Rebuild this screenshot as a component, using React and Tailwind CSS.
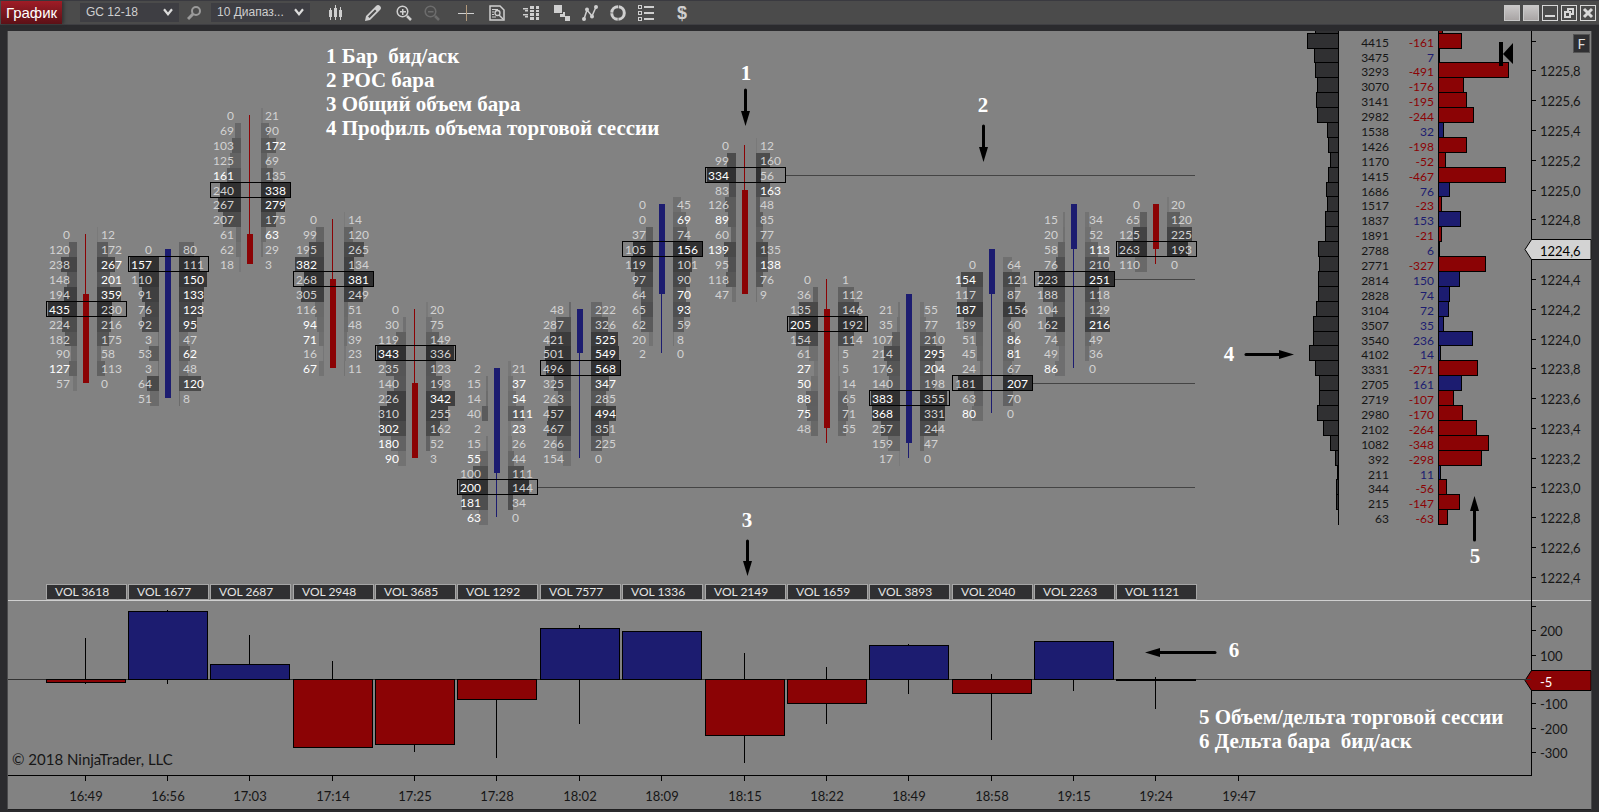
import React from 'react';

const ROW = 14.89;
const RED = '#8b0305';
const BLUE = '#1c1c70';

// one entry per bar: first price row, bid/ask rows ("!" = highlighted), POC row,
// candle body and wick in price rows, delta body and wick in pane pixels
const BARS = [
  { time: '16:49', vol: 3618, first: 13, poc: 5, up: false, body: [17, 23], wick: [13, 23], delta: [78, 81], dWick: [37, 83],
    rows: '0 12|120 172|238 267!|148 201!|194 359!|435! 230|224 216|182 175|90 58|127! 113|57 0' },
  { time: '16:56', vol: 1677, first: 14, poc: 1, up: true, body: [14, 24], wick: [14, 24], delta: [10, 78], dWick: [9, 83],
    rows: '0 80|157! 111|110 150!|91 133!|76 123!|92 95!|3 47|53 62!|3 48|64 120!|51 8' },
  { time: '17:03', vol: 2687, first: 5, poc: 5, up: false, body: [13, 15], wick: [5, 15], delta: [63, 78], dWick: [34, 78],
    rows: '0 21|69 90|103 172!|125 69|161! 135|240 338!|267 279!|207 175|61 63!|62 29|18 3' },
  { time: '17:14', vol: 2948, first: 12, poc: 4, up: false, body: [16, 22], wick: [12, 22], delta: [78, 146], dWick: [60, 146],
    rows: '0 14|99 120|195 265|382! 134|268 381!|305 249|116 51|94! 48|71! 39|16 23|67! 11' },
  { time: '17:25', vol: 3685, first: 18, poc: 3, up: false, body: [23, 28], wick: [18, 28], delta: [78, 143], dWick: [78, 151],
    rows: '0 20|30 75|119 149|343! 336|235 123|140 193|226 342!|310 255|302! 162|180! 52|90! 3' },
  { time: '17:28', vol: 1292, first: 22, poc: 8, up: true, body: [22, 29], wick: [22, 32], line: true, delta: [78, 98], dWick: [78, 157],
    rows: '2 21|15 37!|14 54!|40 111!|2 23!|15 26|55! 44|100 111|200! 144|181! 34|63! 0' },
  { time: '18:02', vol: 7577, first: 18, poc: 4, up: true, body: [18, 21], wick: [18, 28], delta: [27, 78], dWick: [24, 123],
    rows: '48 222|287 326|421 525!|501 549!|496 568!|325 347!|263 285|457 494!|467 351|266 225|154 0' },
  { time: '18:09', vol: 1336, first: 11, poc: 3, up: true, body: [11, 17], wick: [11, 21], delta: [30, 78], dWick: [30, 78],
    rows: '0 45|0 69!|37 74|105 156!|119 101|97 90|64 70!|65 93!|62 59|20 8|2 0' },
  { time: '18:15', vol: 2149, first: 7, poc: 2, up: false, body: [10, 17], wick: [7, 17], line: true, delta: [78, 134], dWick: [52, 162],
    rows: '0 12|99 160|334! 56|83 163!|126 48|89! 85|60 77|139! 135|95 138!|118 76|47 9' },
  { time: '18:22', vol: 1659, first: 16, poc: 3, up: false, body: [18, 26], wick: [16, 27], delta: [78, 102], dWick: [66, 123],
    rows: '0 1|36 112|135 146|205! 192|154 114|61 5|27! 5|50! 14|88! 65|75! 71|48 55' },
  { time: '18:49', vol: 3893, first: 18, poc: 6, up: true, body: [17, 27], wick: [17, 28], delta: [44, 78], dWick: [43, 93],
    rows: '21 55|35 77|107 210|214 295!|176 204!|140 198|383! 355|368! 331|257 244|159 47|17 0' },
  { time: '18:58', vol: 2040, first: 15, poc: 8, up: true, body: [14, 17], wick: [14, 25], line: true, delta: [78, 92], dWick: [73, 139],
    rows: '0 64|154! 121|117 87|187! 156|139 60|51 86!|45 81!|24 67|181 207!|63 70|80! 0' },
  { time: '19:15', vol: 2263, first: 12, poc: 4, up: true, body: [11, 14], wick: [11, 22], line: true, delta: [40, 78], dWick: [40, 90],
    rows: '15 34|20 52|58 113!|76 210|223 251!|188 118|104 129|162 216!|74 49|49 36|86! 0' },
  { time: '19:24', vol: 1121, first: 11, poc: 3, up: false, body: [11, 14], wick: [11, 15], delta: [78, 79], dWick: [76, 108],
    rows: '0 20|65 120|125 225|263 193|110 0' },
];

const TIMES = [...BARS.map((b) => b.time), '19:47'];

// volume and delta per price row of the session; the first row is cut by the top edge
const SESSION = [
  [3230, -28], [4415, -161], [3475, 7], [3293, -491], [3070, -176], [3141, -195], [2982, -244],
  [1538, 32], [1426, -198], [1170, -52], [1415, -467], [1686, 76], [1517, -23], [1837, 153],
  [1891, -21], [2788, 6], [2771, -327], [2814, 150], [2828, 74], [3104, 72], [3507, 35],
  [3540, 236], [4102, 14], [3331, -271], [2705, 161], [2719, -107], [2980, -170], [2102, -264],
  [1082, -348], [392, -298], [211, 11], [344, -56], [215, -147], [63, -63],
];

const barX = (i) => Math.floor(77.2 + 82.35 * i);
const rowY = (k) => Math.round(9.7 + ROW * k);

const parseCell = (s) => ({ value: parseInt(s, 10), hot: s.endsWith('!') });

const FootprintBar = ({ bar, x }) => {
  const rows = bar.rows.split('|').map((r) => r.split(' ').map(parseCell));
  const maxSide = Math.max(...rows.flat().map((c) => c.value));
  const maxTotal = Math.max(...rows.map(([b, a]) => b.value + a.value));
  const color = bar.up ? BLUE : RED;
  const pocY = rowY(bar.first + bar.poc);

  return (
    <g>
      {rows.map(([bid, ask], r) => {
        const k = bar.first + r;
        const top = rowY(k) - 7;
        const h = rowY(k + 1) - rowY(k);
        const shade = r === bar.poc ? 1 : Math.min(0.95, 0.08 + (0.88 * (bid.value + ask.value)) / maxTotal);
        const bw = Math.round((29 * bid.value) / maxSide);
        const aw = Math.round((29 * ask.value) / maxSide);
        return (
          <g key={r} fill="#303031">
            <rect x={x - 8 - bw} y={top} width={bw} height={h} fillOpacity={shade} />
            <rect x={x + 12} y={top} width={aw} height={h} fillOpacity={shade} />
            <text x={x - 15} y={rowY(k) + 5} textAnchor="end" fill={bid.hot ? '#ffffff' : '#d2d2d2'}>{bid.value}</text>
            <text x={x + 16} y={rowY(k) + 5} fill={ask.hot ? '#ffffff' : '#d2d2d2'}>{ask.value}</text>
          </g>
        );
      })}
      <rect x={x} y={rowY(bar.wick[0])} width="1" height={rowY(bar.wick[1]) - rowY(bar.wick[0])} fill={color} />
      <rect x={x - 2} y={rowY(bar.body[0])} width="6" height={rowY(bar.body[1]) - rowY(bar.body[0])} fill={color} />
      {bar.line && <rect x={x + 41} y={pocY} width={1187 - x - 41} height="1" fill="#444444" />}
      <rect x={x - 38.5} y={pocY - 7.5} width="80" height="15" fill="none" stroke="#000000" />
    </g>
  );
};

const PricePane = () => (
  <svg className="block h-[569px] min-w-0 flex-1 overflow-hidden font-[Lato,sans-serif] text-[12px]" shapeRendering="crispEdges">
    {BARS.map((bar, i) => <FootprintBar key={bar.time} bar={bar} x={barX(i)} />)}
    {BARS.map((bar, i) => (
      <g key={bar.time}>
        <rect x={barX(i) - 38.5} y="553.5" width="80" height="15" fill="#303032" stroke="#a6a6a6" />
        <text x={barX(i) - 30} y="565" fill="#e4e4e4">VOL {bar.vol}</text>
      </g>
    ))}
  </svg>
);

const SessionProfile = () => (
  <svg className="block h-[569px] w-[231px] shrink-0 overflow-hidden font-[Lato,sans-serif] text-[12px]" shapeRendering="crispEdges">
    {SESSION.map(([vol, delta], i) => {
      const k = i - 1;
      const y = rowY(k) - 7.5;
      const h = rowY(k + 1) - rowY(k);
      const vw = Math.round(vol * 0.007);
      const dw = Math.max(1, Math.round(Math.abs(delta) * 0.143));
      const color = delta < 0 ? RED : BLUE;
      return (
        <g key={i}>
          <rect x={38.5 - vw} y={y} width={vw} height={h} fill="#303032" stroke="#000000" />
          <rect x="138.5" y={y} width={dw} height={h} fill={color} stroke="#000000" />
          {k >= 0 && <text x="89" y={rowY(k) + 6} textAnchor="end" fill="#161616">{vol}</text>}
          {k >= 0 && <text x="134" y={rowY(k) + 6} textAnchor="end" fill={color}>{delta}</text>}
        </g>
      );
    })}
    <rect x="38" y="0" width="1" height={rowY(33) - 7} fill="#000000" />
    <path d="M199 11h4v24h-4zM203 23l10-11v21z" fill="#000000" shapeRendering="auto" />
  </svg>
);

const PriceAxis = () => {
  const ticks = Array.from({ length: 19 }, (_, i) => i);
  return (
    <svg className="block h-[569px] w-full overflow-visible font-[Lato,sans-serif] text-[13px]" shapeRendering="crispEdges">
      <rect x="0" y="0" width="1" height="570" fill="#000000" />
      {ticks.map((i) => {
        const y = rowY(i * 2);
        return (
          <g key={i}>
            <rect x="0" y={y} width="5" height="1" fill="#000000" />
            {i > 0 && <text x="9" y={y + 6} fill="#161616">{(1226 - i * 0.2).toFixed(1).replace('.', ',')}</text>}
          </g>
        );
      })}
      <path d="M-6 218.5L0.5 208.5H60V228.5H0.5Z" fill="#d3d3d3" stroke="#000000" shapeRendering="auto" />
      <text x="9" y="225" fill="#000000">1224,6</text>
    </svg>
  );
};

const DeltaPane = () => (
  <svg className="block h-[175px] w-full overflow-hidden" shapeRendering="crispEdges">
    <rect x="0" y="78" width="100%" height="1" fill="#333333" />
    {BARS.map((bar, i) => {
      const x = barX(i);
      const [top, bottom] = bar.delta;
      return (
        <g key={bar.time}>
          <rect x={x} y={bar.dWick[0]} width="1" height={bar.dWick[1] - bar.dWick[0]} fill="#000000" />
          <rect x={x - 38.5} y={top + 0.5} width="79" height={bottom - top} fill={top < 78 ? BLUE : RED} stroke="#000000" />
        </g>
      );
    })}
    <rect x="0" y="174" width="100%" height="1" fill="#000000" />
  </svg>
);

const DeltaAxis = () => (
  <svg className="block h-[175px] w-full overflow-visible font-[Lato,sans-serif] text-[13px]" shapeRendering="crispEdges">
    <rect x="0" y="0" width="1" height="175" fill="#000000" />
    {[300, 200, 100, -100, -200, -300].map((v) => {
      const y = Math.round(78 - v * 0.244);
      return (
        <g key={v}>
          <rect x="0" y={y} width="5" height="1" fill="#000000" />
          {v < 300 && <text x="9" y={y + 6} fill="#161616">{v}</text>}
        </g>
      );
    })}
    <path d="M-6 79.5L0.5 69.5H60V89.5H0.5Z" fill={RED} stroke="#000000" shapeRendering="auto" />
    <text x="9" y="86" fill="#ffffff">-5</text>
  </svg>
);

const TimeAxis = () => (
  <svg className="block h-[33px] w-full font-[Lato,sans-serif] text-[13px]" shapeRendering="crispEdges">
    {TIMES.map((t, i) => (
      <g key={t}>
        <rect x={barX(i)} y="0" width="1" height="5" fill="#000000" />
        <text x={barX(i) + 1} y="25" textAnchor="middle" fill="#161616">{t}</text>
      </g>
    ))}
  </svg>
);

// length runs from the tail to the tip, angle 0 points down
const Arrow = ({ x, y, length, angle = 0 }) => (
  <g transform={`translate(${x} ${y}) rotate(${angle})`}>
    <path d={`M0 1V${length - 12}`} stroke="#000000" strokeWidth="3" strokeLinecap="round" />
    <path d={`M-4.500 ${length - 15}H4.500L0 ${length}Z`} fill="#000000" />
  </g>
);

const MARKS = [
  { n: 1, tx: 738, ty: 49, x: 737.5, y: 58, length: 37 },
  { n: 2, tx: 975, ty: 81, x: 975.5, y: 94, length: 37 },
  { n: 3, tx: 739, ty: 496, x: 739.5, y: 509, length: 36 },
  { n: 4, tx: 1221, ty: 330, x: 1237, y: 323.5, length: 49, angle: -90 },
  { n: 5, tx: 1467, ty: 532, x: 1466.5, y: 510, length: 45, angle: 180 },
  { n: 6, tx: 1226, ty: 626, x: 1208, y: 621.5, length: 71, angle: 90 },
];

const Annotations = () => (
  <div className="pointer-events-none absolute inset-0 font-['Liberation_Serif',serif] text-[21px] leading-6 font-bold text-white">
    <svg className="absolute inset-0 h-full w-full">
      {MARKS.map((m) => (
        <g key={m.n}>
          <text x={m.tx} y={m.ty} textAnchor="middle" fill="#ffffff">{m.n}</text>
          <Arrow {...m} />
        </g>
      ))}
    </svg>
    <div className="absolute top-[13px] left-[318px] whitespace-pre">
      <p>1 Бар  бид/аск</p>
      <p>2 POC бара</p>
      <p>3 Общий объем бара</p>
      <p>4 Профиль объема торговой сессии</p>
    </div>
    <div className="absolute top-[674px] left-[1191px] whitespace-pre">
      <p>5 Объем/дельта торговой сессии</p>
      <p>6 Дельта бара  бид/аск</p>
    </div>
  </div>
);

const ToolIcon = ({ label, className = '', children }) => (
  <button type="button" aria-label={label} className={`h-4 w-4 shrink-0 text-[#cfcfcf] ${className}`}>
    <svg viewBox="0 0 16 16" className="block h-4 w-4" fill="currentColor">{children}</svg>
  </button>
);

const ToolSelect = ({ label, value }) => (
  <label className="relative block h-[19px] w-[99px] shrink-0 bg-[#3e3e43]">
    <select aria-label={label} className="block h-full w-full appearance-none pl-1.5 text-[12px] leading-[19px] text-[#cfcfcf] outline-none">
      <option>{value}</option>
    </select>
    <svg viewBox="0 0 10 8" className="pointer-events-none absolute top-[5px] right-[6px] h-2 w-[10px]" fill="none" stroke="#dcdcdc" strokeWidth="2.200">
      <path d="M1 1.200l4 5 4-5" />
    </svg>
  </label>
);

const WindowButton = ({ label, children }) => (
  <button type="button" aria-label={label} className="h-4 w-4 border border-[#d8d8d8]">
    <svg viewBox="0 0 14 14" className="block h-[14px] w-[14px]" fill="none" stroke="#d8d8d8" strokeWidth="2">{children}</svg>
  </button>
);

const Toolbar = () => (
  <header className="flex h-[25px] items-center border-t border-b border-t-[#3a3a40] border-b-[#3f3f43] bg-[#4b4b4b] pl-px pr-[3px] font-['Liberation_Sans',sans-serif]">
    <h1 className="h-[23px] w-[61px] shrink-0 bg-linear-to-b from-[#a01c26] to-[#5c1117] text-center text-[15px] leading-[23px] text-white shadow-[2px_0_3px_#333333]">График</h1>
    <div className="ml-[18px] flex items-center">
      <ToolSelect label="Инструмент" value="GC 12-18" />
      <button type="button" aria-label="Поиск" className="mx-2 h-4 w-4 text-[#9a9a9a]">
        <svg viewBox="0 0 16 16" className="block h-4 w-4" fill="none" stroke="currentColor" strokeWidth="2">
          <circle cx="9" cy="6" r="4" />
          <path d="M6 9l-5 5" strokeWidth="3" />
        </svg>
      </button>
      <ToolSelect label="Интервал" value="10 Диапаз..." />
    </div>
    <nav className="ml-[18px] flex items-center gap-3">
      <ToolIcon label="Стиль бара">
        <path d="M1 5h3v7H1zM6 3h3v9H6zM11 5h3v7h-3zM2 3h1v12H2zM7 0h1v15H7zM12 2h1v13h-1z" />
      </ToolIcon>
      <ToolIcon label="Рисование" className="ml-[9px]">
        <path d="M0 16l1-5L11 1q2-2 4 0t0 4L5 15zM3 11.500L4.500 13 11.500 6 10 4.500z" fillRule="evenodd" />
      </ToolIcon>
      <ToolIcon label="Увеличить" className="ml-[3px]">
        <circle cx="6.500" cy="6.500" r="5.300" fill="none" stroke="currentColor" strokeWidth="1.500" />
        <path d="M6 4h1.500v2H10v1.500H7.500V10H6V7.500H4V6h2z" />
        <path d="M11 11l4 4" stroke="currentColor" strokeWidth="2.500" />
      </ToolIcon>
      <ToolIcon label="Уменьшить" className="opacity-25">
        <circle cx="6.500" cy="6.500" r="5.300" fill="none" stroke="currentColor" strokeWidth="1.500" />
        <path d="M4 6h5.500v1.500H4z" />
        <path d="M11 11l4 4" stroke="currentColor" strokeWidth="2.500" />
      </ToolIcon>
      <ToolIcon label="Перекрестие" className="ml-1.5">
        <path d="M0 8h16v1H0z" />
        <path d="M8 0h1v16H8z" fill="#b39a7c" />
      </ToolIcon>
      <ToolIcon label="Данные" className="ml-[3px]">
        <path d="M1 1h10l4 4v10H1z" fill="none" stroke="currentColor" strokeWidth="1.500" />
        <path d="M3 4h6v1H3zM3 6.500h2v1H3zM3 9h2v1H3zM3 11.500h4v1H3z" />
        <circle cx="8.500" cy="8" r="2.500" fill="none" stroke="currentColor" strokeWidth="1.300" />
        <path d="M10 10l4 4" stroke="currentColor" strokeWidth="1.500" />
      </ToolIcon>
      <ToolIcon label="Стакан" className="ml-1.5">
        <path d="M0 3h5v1.500H0zM2 5h3v1.500H2zM0 9h5v1.500H0zM2 11h3v1.500H2zM7 1h4v3H7zM7 5h4v2H7zM7 8h4v3H7zM7 12h4v3H7zM13 1h3v3h-3zM13 5h3v2h-3zM13 8h3v3h-3zM13 12h3v3h-3z" />
      </ToolIcon>
      <ToolIcon label="Связь" className="ml-[3px]">
        <path d="M0 0h8v8H0zM6 9h5v3H6zM9 7h2v5H9zM11 11h5v5h-5z" />
      </ToolIcon>
      <ToolIcon label="Индикаторы">
        <path d="M2 14L5 5l5 6 4-9" fill="none" stroke="currentColor" strokeWidth="1.500" />
        <circle cx="2" cy="14" r="2" />
        <circle cx="5" cy="4.500" r="2" />
        <circle cx="10" cy="11.500" r="2" />
        <circle cx="14" cy="2" r="2" />
      </ToolIcon>
      <ToolIcon label="Стратегии">
        <circle cx="8" cy="8" r="6.300" fill="none" stroke="currentColor" strokeWidth="3" strokeDasharray="9.200 0.700" />
      </ToolIcon>
      <ToolIcon label="Свойства">
        <path d="M0 0h4v4H0zM1 1v2h2V1zM0 6h4v4H0zM1 7v2h2V7zM0 12h4v4H0zM1 13v2h2v-2z" fillRule="evenodd" />
        <path d="M6 1h10v2H6zM6 7h10v2H6zM6 13h10v2H6z" />
      </ToolIcon>
      <button type="button" aria-label="Счет" className="ml-2 h-4 w-4 text-[18px] leading-4 font-bold text-[#cfcfcf]">$</button>
    </nav>
    <div className="ml-auto flex gap-[3px]">
      <button type="button" aria-label="Связь инструмента" className="h-4 w-4 border border-[#c8c8c8] bg-linear-to-b from-[#c9c7c7] to-[#a9a5a5]" />
      <button type="button" aria-label="Связь интервала" className="h-4 w-4 border border-[#c8c8c8] bg-linear-to-b from-[#c9c7c7] to-[#a9a5a5]" />
      <WindowButton label="Свернуть"><path d="M2 10h10" /></WindowButton>
      <WindowButton label="Развернуть">
        <path d="M3 6h5v5H3zM6 6V3h5v5H8" />
      </WindowButton>
      <WindowButton label="Закрыть"><path d="M3 3l8 8M11 3l-8 8" strokeWidth="3" /></WindowButton>
    </div>
  </header>
);

const App = () => (
  <div className="flex min-h-screen flex-col overflow-x-hidden bg-[#2b2b2e]">
    <Toolbar />
    <main className="relative mx-[7px] mt-1.5 grid grid-cols-[minmax(0,1fr)_60px] border-r border-b border-l border-[#1f1f20] border-r-[#4a4a4c] border-l-[#4a4a4c] bg-[#828282]">
      <div className="flex border-b border-[#d0d0d0]">
        <PricePane />
        <SessionProfile />
      </div>
      <div className="relative border-b border-[#d0d0d0]">
        <PriceAxis />
        <button type="button" aria-label="Фиксированная шкала" className="absolute top-[3px] right-[1px] h-[19px] w-[17px] border border-[#555555] bg-[#2f2f32] font-[Lato,sans-serif] text-[14px] leading-[17px] text-[#dddddd]">F</button>
      </div>
      <div className="relative">
        <DeltaPane />
        <small className="absolute bottom-[9px] left-1 font-[Lato,sans-serif] text-[15px] leading-4 text-[#161616]">© 2018 NinjaTrader, LLC</small>
      </div>
      <DeltaAxis />
      <div className="col-span-2">
        <TimeAxis />
      </div>
      <Annotations />
    </main>
  </div>
);

export default App;
